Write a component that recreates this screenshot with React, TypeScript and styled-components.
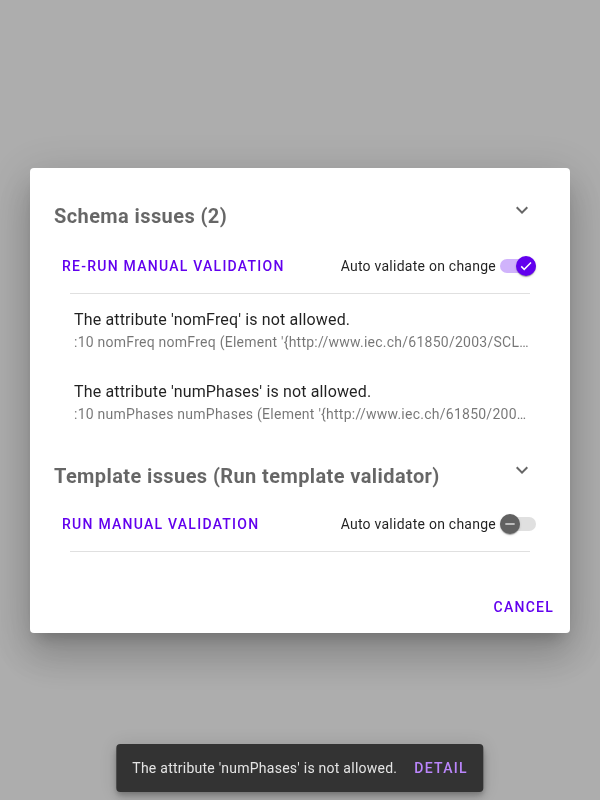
import React from "react";
import styled, { createGlobalStyle } from "styled-components";

const GlobalStyle = createGlobalStyle`
  html, body { margin: 0; padding: 0; background: #ffffff; }
  body { font-family: Roboto, "Noto Sans", sans-serif; -webkit-font-smoothing: antialiased; }
  * { box-sizing: border-box; }
`;

const Scrim = styled.div`
  position: fixed;
  inset: 0;
  background: rgba(0, 0, 0, 0.32);
  display: flex;
  align-items: center;
  justify-content: center;
`;

const Dialog = styled.div`
  width: 540px;
  background: #ffffff;
  border-radius: 4px;
  box-shadow: 0 11px 15px -7px rgba(0, 0, 0, 0.2), 0 24px 38px 3px rgba(0, 0, 0, 0.14),
    0 9px 46px 8px rgba(0, 0, 0, 0.12);
  display: flex;
  flex-direction: column;
`;

const Content = styled.div`
  padding: 24px 24px 29px;
  display: flex;
  flex-direction: column;
  gap: 14px;
`;

const Section = styled.section`
  display: flex;
  flex-direction: column;
`;

const Header = styled.div`
  height: 48px;
  display: flex;
  align-items: center;
  justify-content: space-between;
`;

const Title = styled.h2`
  margin: 0;
  font-family: Roboto, sans-serif;
  font-size: 20px;
  font-weight: 700;
  letter-spacing: 0.4px;
  line-height: 32px;
  color: rgba(0, 0, 0, 0.6);
`;

const Chevron = styled.svg`
  width: 24px;
  height: 24px;
  fill: rgba(0, 0, 0, 0.6);
  margin-right: 12px;
  align-self: flex-start;
  margin-top: 6px;
`;

const ActionRow = styled.div<{ $gap: number }>`
  margin-top: ${(p) => p.$gap}px;
  height: 36px;
  display: flex;
  align-items: center;
  justify-content: space-between;
`;

const TextButton = styled.button<{ $color?: string }>`
  height: 36px;
  padding: 0 8px;
  border: none;
  background: transparent;
  font-family: Roboto, sans-serif;
  font-size: 14px;
  font-weight: 500;
  letter-spacing: 1.25px;
  text-transform: uppercase;
  color: ${(p) => p.$color || "#6200ee"};
  cursor: pointer;
`;

const FormField = styled.label`
  display: flex;
  align-items: center;
  margin-right: 10px;
`;

const FieldLabel = styled.span`
  font-family: Roboto, sans-serif;
  font-size: 14px;
  letter-spacing: 0.25px;
  color: rgba(0, 0, 0, 0.87);
  padding-right: 4px;
`;

const Track = styled.span<{ $on: boolean }>`
  position: relative;
  width: 36px;
  height: 14px;
  border-radius: 7px;
  background: ${(p) => (p.$on ? "#d0b3fb" : "#e0e0e0")};
  display: inline-block;
`;

const Handle = styled.span<{ $on: boolean }>`
  position: absolute;
  top: -3px;
  left: ${(p) => (p.$on ? "16px" : "0px")};
  width: 20px;
  height: 20px;
  border-radius: 50%;
  background: ${(p) => (p.$on ? "#6200ee" : "#616161")};
  box-shadow: 0 2px 1px -1px rgba(0, 0, 0, 0.2), 0 1px 1px 0 rgba(0, 0, 0, 0.14),
    0 1px 3px 0 rgba(0, 0, 0, 0.12);
  display: flex;
  align-items: center;
  justify-content: center;
`;

const HandleIcon = styled.svg`
  width: 14px;
  height: 14px;
  fill: #ffffff;
`;

const Divider = styled.hr`
  margin: 9px 16px 0;
  border: none;
  height: 1px;
  background: rgba(0, 0, 0, 0.12);
`;

const List = styled.ul`
  margin: 0;
  padding: 0;
  list-style: none;
`;

const Item = styled.li`
  height: 72px;
  padding: 16px 16px 0 20px;
  display: flex;
  flex-direction: column;
  overflow: hidden;
`;

const Primary = styled.span`
  font-family: Roboto, sans-serif;
  font-size: 16px;
  line-height: 20px;
  letter-spacing: 0.15px;
  color: rgba(0, 0, 0, 0.87);
  white-space: nowrap;
  overflow: hidden;
  text-overflow: ellipsis;
`;

const Secondary = styled.span`
  margin-top: 2px;
  font-family: Roboto, sans-serif;
  font-size: 14px;
  line-height: 20px;
  letter-spacing: 0.25px;
  color: rgba(0, 0, 0, 0.54);
  white-space: nowrap;
  overflow: hidden;
  text-overflow: ellipsis;
`;

const Actions = styled.div`
  padding: 8px;
  display: flex;
  justify-content: flex-end;
`;

const Snackbar = styled.div`
  position: fixed;
  left: 50%;
  bottom: 8px;
  transform: translateX(-50%);
  height: 48px;
  display: flex;
  align-items: center;
  padding: 0 8px 0 16px;
  background: #333333;
  border-radius: 4px;
  box-shadow: 0 3px 5px -1px rgba(0, 0, 0, 0.2), 0 6px 10px 0 rgba(0, 0, 0, 0.14),
    0 1px 18px 0 rgba(0, 0, 0, 0.12);
`;

const SnackText = styled.span`
  font-family: Roboto, sans-serif;
  font-size: 14px;
  letter-spacing: 0.25px;
  color: rgba(255, 255, 255, 0.87);
  margin-right: 9px;
  white-space: nowrap;
`;

const ExpandMore = () => (
  <Chevron viewBox="0 0 24 24">
    <path d="M16.59 8.59L12 13.17 7.41 8.59 6 10l6 6 6-6z" />
  </Chevron>
);

const Switch = ({ on }: { on: boolean }) => (
  <Track $on={on}>
    <Handle $on={on}>
      <HandleIcon viewBox="0 0 24 24">
        {on ? (
          <path d="M19.69,5.23L8.96,15.96l-4.23-4.23L2.96,13.5l6,6L21.46,7L19.69,5.23z" />
        ) : (
          <path d="M20 13H4v-2h16v2z" />
        )}
      </HandleIcon>
    </Handle>
  </Track>
);

const issues = [
  {
    title: "The attribute 'nomFreq' is not allowed.",
    detail:
      ":10 nomFreq nomFreq (Element '{http://www.iec.ch/61850/2003/SCL}Substation', attribute 'nomFreq': The attribute 'nomFreq' is not allowed.)",
  },
  {
    title: "The attribute 'numPhases' is not allowed.",
    detail:
      ":10 numPhases numPhases (Element '{http://www.iec.ch/61850/2003/SCL}Substation', attribute 'numPhases': The attribute 'numPhases' is not allowed.)",
  },
];

export default function App() {
  return (
    <>
      <GlobalStyle />
      <Scrim>
        <Dialog>
          <Content>
            <Section>
              <Header>
                <Title>Schema issues (2)</Title>
                <ExpandMore />
              </Header>
              <ActionRow $gap={8}>
                <TextButton>Re-run manual validation</TextButton>
                <FormField>
                  <FieldLabel>Auto validate on change</FieldLabel>
                  <Switch on={true} />
                </FormField>
              </ActionRow>
              <Divider />
              <List>
                {issues.map((i) => (
                  <Item key={i.title}>
                    <Primary>{i.title}</Primary>
                    <Secondary>{i.detail}</Secondary>
                  </Item>
                ))}
              </List>
            </Section>
            <Section>
              <Header>
                <Title>Template issues (Run template validator)</Title>
                <ExpandMore />
              </Header>
              <ActionRow $gap={6}>
                <TextButton>Run manual validation</TextButton>
                <FormField>
                  <FieldLabel>Auto validate on change</FieldLabel>
                  <Switch on={false} />
                </FormField>
              </ActionRow>
              <Divider />
            </Section>
          </Content>
          <Actions>
            <TextButton>Cancel</TextButton>
          </Actions>
        </Dialog>
      </Scrim>
      <Snackbar>
        <SnackText>The attribute 'numPhases' is not allowed.</SnackText>
        <TextButton $color="#bb86fc">Detail</TextButton>
      </Snackbar>
    </>
  );
}
